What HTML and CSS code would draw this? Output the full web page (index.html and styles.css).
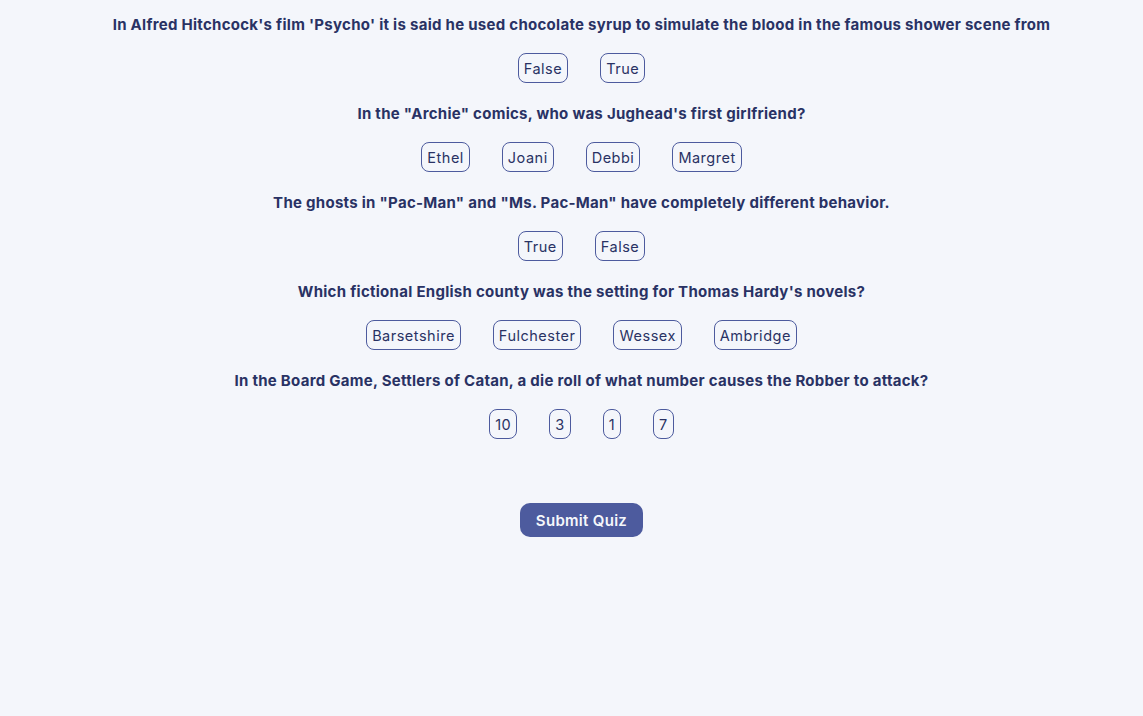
FILE: index.html
```html
<!DOCTYPE html>
<html>
<head>
<meta charset="utf-8">
<link rel="stylesheet" href="styles.css">
</head>
<body>
<main class="quiz">
  <section class="question">
    <h2 class="question-title">In Alfred Hitchcock's film 'Psycho' it is said he used chocolate syrup to simulate the blood in the famous shower scene from</h2>
    <div class="options">
      <button class="option">False</button>
      <button class="option">True</button>
    </div>
  </section>
  <section class="question">
    <h2 class="question-title">In the "Archie" comics, who was Jughead's first girlfriend?</h2>
    <div class="options">
      <button class="option">Ethel</button>
      <button class="option">Joani</button>
      <button class="option">Debbi</button>
      <button class="option">Margret</button>
    </div>
  </section>
  <section class="question">
    <h2 class="question-title">The ghosts in "Pac-Man" and "Ms. Pac-Man" have completely different behavior.</h2>
    <div class="options">
      <button class="option">True</button>
      <button class="option">False</button>
    </div>
  </section>
  <section class="question">
    <h2 class="question-title">Which fictional English county was the setting for Thomas Hardy's novels?</h2>
    <div class="options">
      <button class="option">Barsetshire</button>
      <button class="option">Fulchester</button>
      <button class="option">Wessex</button>
      <button class="option">Ambridge</button>
    </div>
  </section>
  <section class="question">
    <h2 class="question-title">In the Board Game, Settlers of Catan, a die roll of what number causes the Robber to attack?</h2>
    <div class="options">
      <button class="option">10</button>
      <button class="option">3</button>
      <button class="option">1</button>
      <button class="option">7</button>
    </div>
  </section>
  <div class="submit-row">
    <button class="submit">Submit Quiz</button>
  </div>
</main>
</body>
</html>
```
FILE: styles.css
```css
html, body {
  margin: 0;
  padding: 0;
  background: #F4F6FB;
  color: #293264;
  font-family: Inter, "Noto Sans", sans-serif;
}
body {
  min-height: 716px;
}
.quiz {
  display: flex;
  flex-direction: column;
  align-items: center;
  padding: 13px 0 0 20px;
}
.question {
  display: flex;
  flex-direction: column;
  align-items: center;
}
.question-title {
  margin: 0;
  padding-top: 2px;
  font-size: 15px;
  line-height: 20px;
  font-weight: 700;
  letter-spacing: 0.28px;
  text-align: center;
}
.options {
  display: flex;
  gap: 32px;
  margin: 18px 0 19px;
}
.option {
  height: 30px;
  padding: 0 5px;
  border: 1px solid #4D5B9E;
  border-radius: 8px;
  background: transparent;
  color: #293264;
  font-family: inherit;
  font-size: 14.5px;
  font-weight: 400;
  letter-spacing: 0.5px;
}
.submit-row {
  margin-top: 45px;
}
.submit {
  width: 123px;
  height: 34px;
  border: none;
  border-radius: 10px;
  background: #4D5B9E;
  color: #F5F7FB;
  font-family: inherit;
  font-size: 15px;
  font-weight: 600;
  letter-spacing: 0.3px;
}
```
